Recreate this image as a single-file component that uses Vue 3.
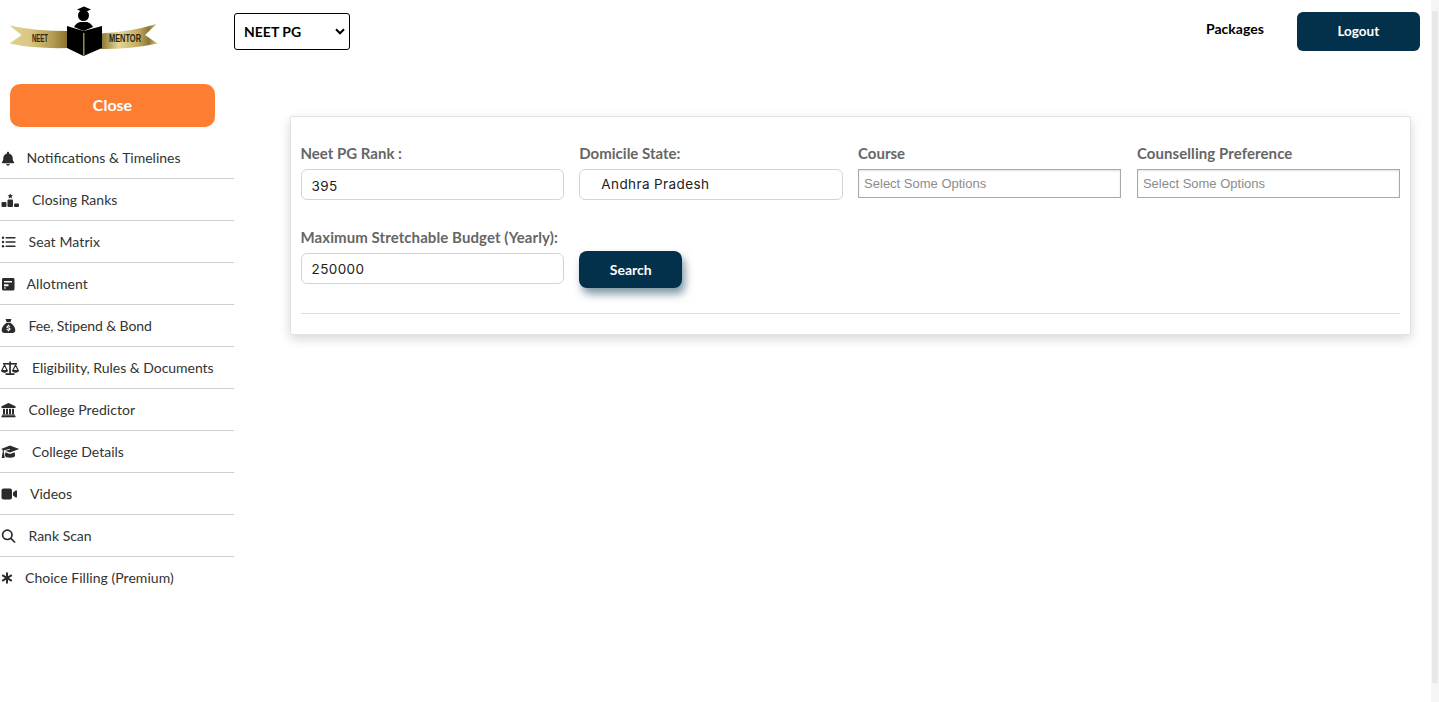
<script setup>
const items = [
  { label: 'Notifications & Timelines', icon: 'bell', gap: 26.5, ls: 0 },
  { label: 'Closing Ranks', icon: 'ranks', gap: 32, ls: 0 },
  { label: 'Seat Matrix', icon: 'list', gap: 28.5, ls: 0.1 },
  { label: 'Allotment', icon: 'allot', gap: 26.5, ls: 0.1 },
  { label: 'Fee, Stipend & Bond', icon: 'bag', gap: 28.5, ls: -0.1 },
  { label: 'Eligibility, Rules & Documents', icon: 'scale', gap: 32, ls: -0.03 },
  { label: 'College Predictor', icon: 'bank', gap: 28.5, ls: 0.06 },
  { label: 'College Details', icon: 'cap', gap: 32, ls: 0 },
  { label: 'Videos', icon: 'video', gap: 30, ls: 0 },
  { label: 'Rank Scan', icon: 'search', gap: 28.5, ls: 0 },
  { label: 'Choice Filling (Premium)', icon: 'star', gap: 25, ls: 0.04 }
]
</script>

<template>
  <div class="page">
    <header class="topbar">
      <svg class="logo" viewBox="0 0 170 60" width="170" height="60">
        <defs>
          <linearGradient id="goldL" gradientUnits="userSpaceOnUse" x1="10" x2="67" y1="0" y2="0">
            <stop offset="0" stop-color="#e2d08e" />
            <stop offset="0.35" stop-color="#d8c684" />
            <stop offset="0.75" stop-color="#b49c52" />
            <stop offset="1" stop-color="#8b7433" />
          </linearGradient>
          <linearGradient id="goldR" gradientUnits="userSpaceOnUse" x1="102" x2="157" y1="0" y2="0">
            <stop offset="0" stop-color="#8f7a36" />
            <stop offset="0.3" stop-color="#e4d594" />
            <stop offset="0.65" stop-color="#c4ad62" />
            <stop offset="0.85" stop-color="#8d7635" />
            <stop offset="1" stop-color="#d6c47f" />
          </linearGradient>
        </defs>
        <path d="M9.500 25.500 Q35 31 68 31 L68 48 Q35 49 9.500 43.500 L21.500 35 Z" fill="url(#goldL)" />
        <path d="M101 33.500 Q130 32 156.500 24 L145 35 L157.500 43.500 Q132 49 101 49 Z" fill="url(#goldR)" />
        <path d="M67 26 L83.500 31 L102 26 L102 48 L83.500 56 L67 48 Z" fill="#000" />
        <path d="M83 33 L84.500 33 L84.500 55.500 L83 55.500 Z" fill="#a08a45" />
        <path d="M74 27 Q76 23 80 22 L87 22 Q91 23 93 27 L83.500 31 Z" fill="#000" />
        <circle cx="83.500" cy="15.500" r="5.500" fill="#000" />
        <path d="M77 9.500 L84 6.500 L91 9.500 L84 12.500 Z" fill="#000" />
        <text x="32" y="42" class="logo-text" textLength="16" lengthAdjust="spacingAndGlyphs">NEET</text>
        <text x="109" y="42" class="logo-text" textLength="32" lengthAdjust="spacingAndGlyphs">MENTOR</text>
      </svg>
      <div class="select-box">
        <span>NEET PG</span>
        <svg class="chev" viewBox="0 0 10 7" width="10" height="7"><path d="M1 1.300 L5 5.300 L9 1.300" fill="none" stroke="#000" stroke-width="2" /></svg>
      </div>
      <a class="packages">Packages</a>
      <button class="logout">Logout</button>
    </header>

    <div class="body">
      <aside class="sidebar">
        <button class="close">Close</button>
        <ul class="menu">
          <li v-for="item in items" :key="item.label" class="menu-item">
            <span class="icon" :style="{ width: item.gap + 'px' }">
              <svg viewBox="0 0 20 16" width="20" height="16" fill="#2b2b2b">
                <path v-if="item.icon === 'bell'" d="M8 1.800c-.6 0-1 .4-1 1v.6C4.600 3.900 3.300 6 3.300 8c0 2.600-.8 3.500-1.300 4.100-.4.500-.1 1.200.5 1.200h11c.6 0 .9-.7.5-1.200-.5-.6-1.300-1.500-1.300-4.100 0-2-1.300-4.100-3.700-4.600v-.6c0-.6-.4-1-1-1zM6.300 14c0 .9.800 1.600 1.700 1.600s1.700-.7 1.700-1.600z" />
                <g v-else-if="item.icon === 'ranks'">
                  <rect x="1.500" y="10" width="5" height="5" rx="1" />
                  <rect x="7.500" y="7.500" width="5.500" height="7.500" rx="1" />
                  <rect x="14" y="11.500" width="5" height="3.500" rx="1" />
                  <path d="M10.300 1.500l.8 1.600 1.800.3-1.300 1.200.3 1.800-1.600-.8-1.600.8.3-1.800-1.300-1.200 1.800-.3z" />
                </g>
                <g v-else-if="item.icon === 'list'">
                  <circle cx="3" cy="3.800" r="1.200" /><circle cx="3" cy="8" r="1.200" /><circle cx="3" cy="12.200" r="1.200" />
                  <rect x="5.500" y="3" width="10" height="1.600" rx=".4" /><rect x="5.500" y="7.200" width="10" height="1.600" rx=".4" /><rect x="5.500" y="11.400" width="10" height="1.600" rx=".4" />
                </g>
                <path v-else-if="item.icon === 'allot'" fill-rule="evenodd" d="M3.500 2h9.500c.9 0 1.500.6 1.500 1.500v9.500c0 .9-.6 1.500-1.500 1.500H3.500c-.9 0-1.500-.6-1.500-1.500V3.500C2 2.600 2.600 2 3.500 2zM4 5v1.500h8V5zM4 8.200v2h4.500v-2zM4 11.400v1.200h2v-1.200z" />
                <path v-else-if="item.icon === 'bag'" fill-rule="evenodd" d="M5.500 1h6L10.400 4H6.600zM6.500 4.800h4c2.500 1.600 4.800 4.600 4.800 7.400 0 1.700-1.200 2.800-2.800 2.800H4.500C2.900 15 1.700 13.900 1.700 12.200c0-2.800 2.300-5.800 4.800-7.400zM8 6.800v.8c-1 .2-1.500.8-1.500 1.500 0 1.700 2.800 1.100 2.800 1.900 0 .6-1.500.4-2.500-.1l-.3 1c.4.200.9.400 1.500.5v.8h1v-.8c1-.2 1.500-.8 1.500-1.500 0-1.800-2.800-1.200-2.800-2 0-.5 1.200-.4 2.200.1l.3-1c-.4-.2-.9-.3-1.200-.4v-.8z" />
                <g v-else-if="item.icon === 'scale'">
                  <rect x="9.200" y="1.500" width="1.700" height="12.500" />
                  <rect x="3" y="3" width="14" height="1.600" />
                  <rect x="5.500" y="13.200" width="9" height="1.800" rx=".4" />
                  <path d="M1 10h7c0 1.700-1.500 2.800-3.500 2.800S1 11.700 1 10zM12 10h7c0 1.700-1.500 2.800-3.500 2.800S12 11.700 12 10z" />
                  <path d="M1.800 10.500L4.500 5 7.200 10.500M12.800 10.500L15.500 5 18.200 10.500" fill="none" stroke="#2b2b2b" stroke-width="1.200" />
                </g>
                <g v-else-if="item.icon === 'bank'">
                  <path d="M8.500 1L15.500 4.300V6H1.500V4.300z" />
                  <rect x="3" y="6.800" width="2" height="5.500" /><rect x="6" y="6.800" width="2" height="5.500" /><rect x="9" y="6.800" width="2" height="5.500" /><rect x="12" y="6.800" width="2" height="5.500" />
                  <rect x="2" y="12.500" width="13" height="1.200" /><rect x="1.500" y="13.800" width="14" height="1.500" />
                </g>
                <g v-else-if="item.icon === 'cap'">
                  <path d="M10 1.500L19.200 5 10 8.500 5 6.700 10 5.700 9.800 5.100 3.800 6.300v2.300c.5 1.200.5 3 .9 5.400H1.700c.4-2.400.5-4.200 1-5.400V5.700L1 5z" />
                  <path d="M5.300 8.300l4.700 1.700 4.700-1.700.4 3.200c0 1.300-2.300 2.300-5.100 2.300s-5-1-5-2.300z" />
                </g>
                <g v-else-if="item.icon === 'video'">
                  <rect x="1.500" y="2.500" width="10.500" height="11" rx="2" />
                  <path d="M13 6.500l2.700-2c.6-.4 1.300 0 1.300.7v5.600c0 .7-.7 1.100-1.300.7L13 9.500z" />
                </g>
                <g v-else-if="item.icon === 'search'" fill="none" stroke="#2b2b2b" stroke-width="1.700">
                  <circle cx="7.300" cy="6.800" r="4.700" />
                  <path d="M10.700 10.200L15 14.500" />
                </g>
                <g v-else fill="none" stroke="#2b2b2b" stroke-width="2">
                  <path d="M7 2.500V13.500M2.200 5.200L11.800 10.800M11.800 5.200L2.200 10.800" />
                </g>
              </svg>
            </span>
            <span class="label" :style="{ letterSpacing: item.ls + 'px' }">{{ item.label }}</span>
          </li>
        </ul>
      </aside>

      <main class="main">
        <section class="card">
          <div class="row">
            <div class="field">
              <label>Neet PG Rank :</label>
              <div class="input rank">395</div>
            </div>
            <div class="field">
              <label>Domicile State:</label>
              <div class="input state">Andhra Pradesh</div>
            </div>
            <div class="field">
              <label>Course</label>
              <div class="multi">Select Some Options</div>
            </div>
            <div class="field">
              <label class="wide">Counselling Preference</label>
              <div class="multi">Select Some Options</div>
            </div>
          </div>
          <div class="row second">
            <div class="field">
              <label class="wide">Maximum Stretchable Budget (Yearly):</label>
              <div class="input">250000</div>
            </div>
            <div class="field">
              <button class="search">Search</button>
            </div>
          </div>
          <hr class="rule" />
        </section>
      </main>
    </div>
    <div class="scrollbar"><div class="thumb"></div></div>
  </div>
</template>

<style>
html, body { margin: 0; padding: 0; background: #fff; overflow: hidden; }
</style>

<style scoped>
.page {
  position: relative;
  width: 1439px;
  height: 702px;
  overflow: hidden;
  background: #fff;
  font-family: Lato, "Liberation Sans", sans-serif;
  color: #333;
}
.topbar {
  display: flex;
  align-items: flex-start;
  height: 84px;
  box-sizing: border-box;
}
.logo { flex: none; }
.select-box {
  margin: 13px 0 0 64px;
  width: 116px;
  height: 37px;
  box-sizing: border-box;
  border: 1px solid #000;
  border-radius: 3px;
  display: flex;
  align-items: center;
  justify-content: space-between;
  padding: 0 4px 0 9px;
  font-size: 14px;
  font-weight: 700;
  color: #000;
}
.packages {
  margin: 20px 0 0 856px;
  font-size: 14px;
  line-height: 18px;
  font-weight: 700;
  color: #000;
}
.logout {
  margin: 12px 0 0 33px;
  width: 123px;
  height: 39px;
  padding: 0 0 1px;
  border: 0;
  border-radius: 6px;
  background: #03304a;
  color: #fff;
  font: 700 13.500px Lato, sans-serif;
}
.body { display: flex; }
.sidebar { width: 234px; flex: none; }
.close {
  display: block;
  margin-left: 10px;
  width: 205px;
  height: 43px;
  padding: 0 0 2px;
  border: 0;
  border-radius: 10px;
  background: #fd7e33;
  color: #fff;
  font: 700 16px Lato, sans-serif;
}
.menu { list-style: none; margin: 10px 0 0; padding: 0; }
.menu-item {
  height: 42px;
  box-sizing: border-box;
  display: flex;
  align-items: center;
  border-bottom: 1px solid #cfcfcf;
  font-size: 14px;
}
.menu-item:last-child { border-bottom-color: transparent; }
.icon { display: flex; flex: none; align-items: center; }
.icon svg { display: block; flex: none; }
.label { white-space: nowrap; }
.main { flex: 1; padding: 32px 28px 0 56px; }
.card {
  width: 1121px;
  height: 219px;
  box-sizing: border-box;
  border: 1px solid #e2e2e2;
  border-radius: 2px;
  padding: 26px 10px 0 9.500px;
  box-shadow: 0 4px 12px rgba(0, 0, 0, .16);
  background: #fff;
}
.row { display: grid; grid-template-columns: repeat(4, 263.300px); column-gap: 15.500px; }
.second { margin-top: 27px; }
.field label {
  display: block;
  font-size: 15px;
  line-height: 20px;
  font-weight: 700;
  color: #666;
  margin-bottom: 6px;
  white-space: nowrap;
}
.field label.wide { letter-spacing: .08px; }
.input {
  height: 31px;
  box-sizing: border-box;
  border: 1px solid #d4d4d4;
  border-radius: 6px;
  padding: 0 10px;
  font: 13.500px/30px Inter, "Liberation Sans", sans-serif;
  letter-spacing: .4px;
  color: #212121;
}
.rank { line-height: 32px; }
.state { padding-left: 21px; line-height: 28px; }
.multi {
  height: 29px;
  box-sizing: border-box;
  border: 1px solid #a9a9a9;
  padding: 0 5px;
  font: 13px/27px "Liberation Sans", Arial, sans-serif;
  color: #8c8c8c;
  box-shadow: inset 0 1px 2px rgba(0,0,0,.12);
}
.search {
  display: block;
  margin-top: 24px;
  width: 103px;
  height: 37px;
  border: 0;
  border-radius: 8px;
  background: #03304a;
  color: #fff;
  font: 700 14px Lato, sans-serif;
  box-shadow: 3px 6px 9px rgba(3, 48, 74, .5);
}
.rule { border: 0; border-top: 1px solid #dcdcdc; margin: 25px 0 0; }
.scrollbar {
  position: absolute;
  right: 0;
  top: 0;
  width: 8px;
  height: 702px;
  background: #f5f5f5;
}
.thumb { margin: 11px 1px 0; height: 672px; background: #e8e8e8; }
.logo-text { font: 700 11px "Liberation Sans", sans-serif; fill: #2a2412; }
</style>
